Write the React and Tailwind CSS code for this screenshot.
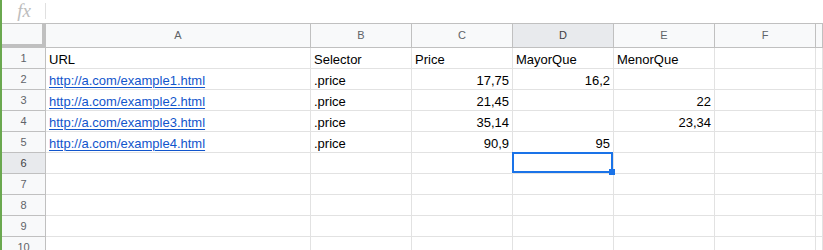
import React from "react";

const cols = ["A", "B", "C", "D", "E", "F", ""];
const rows = [
  [{ t: "URL" }, { t: "Selector" }, { t: "Price" }, { t: "MayorQue" }, { t: "MenorQue" }],
  [{ t: "http://a.com/example1.html", link: true }, { t: ".price" }, { t: "17,75", n: true }, { t: "16,2", n: true }, { t: "" }],
  [{ t: "http://a.com/example2.html", link: true }, { t: ".price" }, { t: "21,45", n: true }, { t: "" }, { t: "22", n: true }],
  [{ t: "http://a.com/example3.html", link: true }, { t: ".price" }, { t: "35,14", n: true }, { t: "" }, { t: "23,34", n: true }],
  [{ t: "http://a.com/example4.html", link: true }, { t: ".price" }, { t: "90,9", n: true }, { t: "95", n: true }, { t: "" }],
  [], [], [], [], [],
];

export default function App() {
  return (
    <div
      className="w-[823px] h-[250px] overflow-hidden bg-white border-l-2 border-[#6aa84f] text-[13px] text-black"
      style={{ fontFamily: '"Liberation Sans", Arial, sans-serif' }}
    >
      {/* formula bar */}
      <div className="flex h-[24px] border-b border-[#c0c0c0]">
        <div className="w-[43px] flex items-center justify-center pl-[1px]">
          <span
            className="italic text-[19px] leading-none text-[#bdbdbd] -mt-[2px]"
            style={{ fontFamily: '"Liberation Serif", "DejaVu Serif", serif' }}
          >
            fx
          </span>
        </div>
        <div className="w-px h-[16px] mt-[3px] bg-[#e0e0e0]" />
      </div>

      <div className="grid grid-cols-[44px_265px_101px_101px_101px_101px_101px_1fr]">
        {/* header row */}
        <div className="h-[24px] bg-[#f8f9fa] border-r-[4px] border-b-[4px] border-[#c0c0c0]" />
        {cols.map((c, i) => (
          <div
            key={"h" + i}
            className={
              "h-[24px] flex items-center justify-center text-[11px] border-r border-b border-[#c0c0c0] " +
              (c === "D" ? "bg-[#e8eaed] text-[#3c4043]" : "bg-[#f8f9fa] text-[#5f6368]")
            }
          >
            {c}
          </div>
        ))}

        {rows.map((r, ri) => (
          <React.Fragment key={"r" + ri}>
            <div
              className={
                "h-[21px] flex items-center justify-center text-[11px] border-r border-b border-[#c0c0c0] " +
                (ri === 5 ? "bg-[#e8eaed] text-[#3c4043]" : "bg-[#f8f9fa] text-[#5f6368]")
              }
            >
              {ri + 1}
            </div>
            {[0, 1, 2, 3, 4, 5, 6].map((ci) => {
              const cell = r[ci];
              const selected = ri === 5 && ci === 3;
              return (
                <div
                  key={ci}
                  className={
                    "h-[21px] relative flex items-end px-[3px] pb-[1px] border-r border-b border-[#e2e2e2] whitespace-nowrap overflow-visible " +
                    (cell && cell.n ? "justify-end" : "justify-start") +
                    (selected ? " z-10" : "")
                  }
                >
                  {cell && cell.t ? (
                    <span
                      className={
                        "leading-[15px] " +
                        (cell.link ? "text-[#1155cc] underline decoration-1 underline-offset-[2px]" : "")
                      }
                    >
                      {cell.t}
                    </span>
                  ) : null}
                  {selected ? (
                    <>
                      <div className="absolute -top-[1px] -left-[1px] right-0 bottom-0 border-2 border-[#1a73e8]" />
                      <div className="absolute -right-[2px] -bottom-[2px] w-[6px] h-[6px] bg-[#1a73e8]" />
                    </>
                  ) : null}
                </div>
              );
            })}
          </React.Fragment>
        ))}
      </div>
    </div>
  );
}
